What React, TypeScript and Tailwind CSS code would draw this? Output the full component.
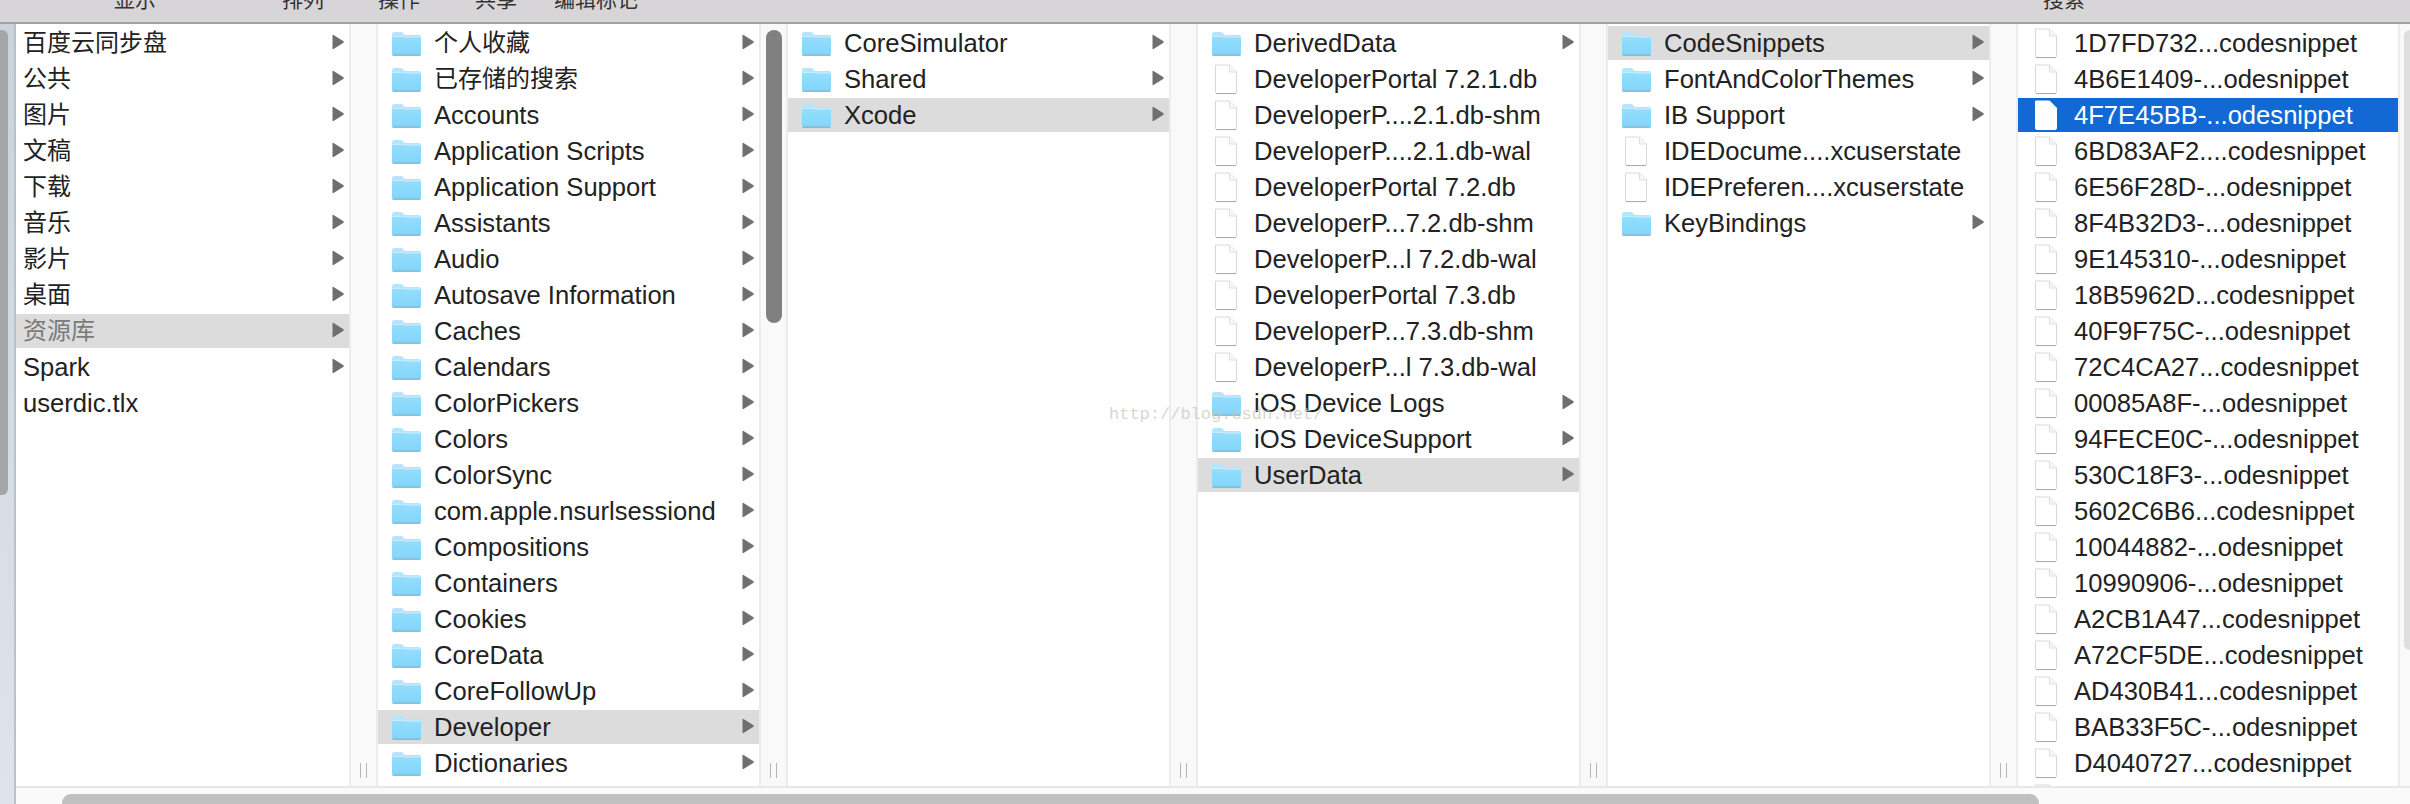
import React from "react";

type Item = { name: string; kind: "folder" | "file"; arrow?: boolean; state?: "open" | "active"; muted?: boolean };

const folder = (name: string, state?: "open" | "active", muted?: boolean): Item => ({ name, kind: "folder", arrow: true, state, muted });
const file = (name: string, state?: "open" | "active"): Item => ({ name, kind: "file", state });

const col0: Item[] = [
  folder("百度云同步盘"), folder("公共"), folder("图片"), folder("文稿"), folder("下载"), folder("音乐"),
  folder("影片"), folder("桌面"), folder("资源库", "open", true), folder("Spark"), file("userdic.tlx"),
];
const col1: Item[] = [
  folder("个人收藏"), folder("已存储的搜索"), folder("Accounts"), folder("Application Scripts"), folder("Application Support"),
  folder("Assistants"), folder("Audio"), folder("Autosave Information"), folder("Caches"), folder("Calendars"),
  folder("ColorPickers"), folder("Colors"), folder("ColorSync"), folder("com.apple.nsurlsessiond"), folder("Compositions"),
  folder("Containers"), folder("Cookies"), folder("CoreData"), folder("CoreFollowUp"), folder("Developer", "open"), folder("Dictionaries"),
];
const col2: Item[] = [folder("CoreSimulator"), folder("Shared"), folder("Xcode", "open")];
const col3: Item[] = [
  folder("DerivedData"), file("DeveloperPortal 7.2.1.db"), file("DeveloperP....2.1.db-shm"), file("DeveloperP....2.1.db-wal"),
  file("DeveloperPortal 7.2.db"), file("DeveloperP...7.2.db-shm"), file("DeveloperP...l 7.2.db-wal"), file("DeveloperPortal 7.3.db"),
  file("DeveloperP...7.3.db-shm"), file("DeveloperP...l 7.3.db-wal"), folder("iOS Device Logs"), folder("iOS DeviceSupport"), folder("UserData", "open"),
];
const col4: Item[] = [
  folder("CodeSnippets", "open"), folder("FontAndColorThemes"), folder("IB Support"), file("IDEDocume....xcuserstate"),
  file("IDEPreferen....xcuserstate"), folder("KeyBindings"),
];
const col5: Item[] = [
  file("1D7FD732...codesnippet"), file("4B6E1409-...odesnippet"), file("4F7E45BB-...odesnippet", "active"), file("6BD83AF2....codesnippet"),
  file("6E56F28D-...odesnippet"), file("8F4B32D3-...odesnippet"), file("9E145310-...odesnippet"), file("18B5962D...codesnippet"),
  file("40F9F75C-...odesnippet"), file("72C4CA27...codesnippet"), file("00085A8F-...odesnippet"), file("94FECE0C-...odesnippet"),
  file("530C18F3-...odesnippet"), file("5602C6B6...codesnippet"), file("10044882-...odesnippet"), file("10990906-...odesnippet"),
  file("A2CB1A47...codesnippet"), file("A72CF5DE...codesnippet"), file("AD430B41...codesnippet"), file("BAB33F5C-...odesnippet"),
  file("D4040727...codesnippet"), file(""),
];

function FolderIcon() {
  return (
    <svg width="31" height="25" viewBox="0 0 31 25" className="shrink-0">
      <defs>
        <linearGradient id="folderFront" x1="0" y1="0" x2="0" y2="1">
          <stop offset="0" stopColor="#93defd" />
          <stop offset="1" stopColor="#82d5fb" />
        </linearGradient>
      </defs>
      <path d="M1 3.5 Q1 1 3 1 H10 Q11.5 1 12.5 2.5 L13.5 4 H28 Q30 4 30 6 V10 H1 Z" fill="#b2e6fc" />
      <path d="M1 6 H30 V22.5 Q30 24 28.5 24 H2.5 Q1 24 1 22.5 Z" fill="url(#folderFront)" />
      <path d="M1 5.5 H13.5 L14 6 H30" fill="none" stroke="#c8eefd" strokeWidth="1" />
      <path d="M1.5 24.2 H29.5" stroke="#8aa9bc" strokeWidth="1.2" />
    </svg>
  );
}

function FileIcon({ active }: { active?: boolean }) {
  return (
    <svg width="24" height="31" viewBox="0 0 24 31" className="shrink-0">
      <path
        d="M1.5 1 H15.5 L22.5 8 V28 Q22.5 29.5 21 29.5 H3 Q1.5 29.5 1.5 28 Z"
        fill="#ffffff"
        stroke={active ? "#ffffff" : "#d8d8d8"}
        strokeWidth="1"
      />
      {!active && <path d="M15.5 1 V8 H22.5" fill="#f7f7f7" stroke="#dedede" strokeWidth="1" />}
      {!active && <path d="M2 29.6 H22" stroke="#a8a8a8" strokeWidth="1" />}
    </svg>
  );
}

function Row({ item, iconless }: { item: Item; iconless?: boolean }) {
  const active = item.state === "active";
  const open = item.state === "open";
  const cjk = /[\u4e00-\u9fff]/.test(item.name);
  return (
    <div
      className={`flex h-[34px] shrink-0 items-center pr-[5px] ${active ? "bg-[#1269d6] text-white" : open ? "bg-[#dcdcdc]" : ""} ${
        item.muted ? "text-[#7a7a7a]" : active ? "" : "text-[#222222]"
      } ${iconless ? "pl-[7px]" : ""}`}
    >
      {!iconless && (
        <div className="flex h-[32px] w-[56px] shrink-0 items-center justify-center">
          {item.kind === "folder" ? <FolderIcon /> : <FileIcon active={active} />}
        </div>
      )}
      <span className={`flex-1 whitespace-nowrap leading-[34px] ${cjk ? "text-[24px]" : "text-[25.6px]"}`}>{item.name}</span>
      {item.arrow && (
        <svg width="12" height="16" viewBox="0 0 12 16" className="mb-[2px] shrink-0">
          <path d="M0.5 1.5 Q0.5 0.5 1.5 1 L11.5 7.2 Q12 8 11.5 8.8 L1.5 15 Q0.5 15.5 0.5 14.5 Z" fill="#6f6f6f" />
        </svg>
      )}
    </div>
  );
}

function Column({ items, width, iconless }: { items: Item[]; width: string; iconless?: boolean }) {
  return (
    <div className={`flex h-full shrink-0 flex-col gap-[2px] overflow-hidden bg-white pt-[2px] ${width}`}>
      {items.map((item, i) => (
        <Row key={i} item={item} iconless={iconless} />
      ))}
    </div>
  );
}

function Gutter({ thumb }: { thumb?: boolean }) {
  return (
    <div className="flex h-full w-[29px] shrink-0 flex-col items-center border-x-2 border-[#ececec] bg-[#f9f9f9]">
      {thumb && <div className="mt-[6px] h-[293px] w-[16px] rounded-full bg-[#808080]" />}
      <div className="mt-auto mb-[8px] flex gap-[5px]">
        <div className="h-[15px] w-[1px] bg-[#b5b5b5]" />
        <div className="h-[15px] w-[1px] bg-[#b5b5b5]" />
      </div>
    </div>
  );
}

const labels: [string, string][] = [
  ["显示", "ml-[114px]"],
  ["排列", "ml-[126px]"],
  ["操作", "ml-[54px]"],
  ["共享", "ml-[55px]"],
  ["编辑标记", "ml-[37px]"],
  ["搜索", "ml-[1405px]"],
];

export default function App() {
  return (
    <div
      className="relative flex h-[804px] w-[2410px] flex-col overflow-hidden bg-white"
      style={{ fontFamily: '"Liberation Sans", "Noto Sans CJK SC", sans-serif' }}
    >
      <div className="flex h-[24px] shrink-0 overflow-hidden border-b-2 border-[#a3a3a3] bg-[#d7d5d7]">
        {labels.map(([text, margin]) => (
          <span key={text} className={`-mt-[12px] whitespace-nowrap text-[21px] leading-[24px] text-[#333333] ${margin}`}>
            {text}
          </span>
        ))}
      </div>

      <div className="flex min-h-0 flex-1">
        <div className="flex w-[16px] shrink-0 flex-col border-r-2 border-[#b9c1c9] bg-gradient-to-b from-[#ccd2dc] to-[#dde5ea] pt-[6px]">
          <div className="h-[465px] w-[8px] rounded-r-[6px] bg-[#a3a6a8]" />
        </div>

        <div className="flex min-w-0 flex-1 flex-col">
          <div className="flex h-[762px] shrink-0">
            <Column items={col0} width="w-[333px]" iconless />
            <Gutter />
            <Column items={col1} width="w-[381px]" />
            <Gutter thumb />
            <Column items={col2} width="w-[381px]" />
            <Gutter />
            <Column items={col3} width="w-[381px]" />
            <Gutter />
            <Column items={col4} width="w-[381px]" />
            <Gutter />
            <Column items={col5} width="w-[380px]" />
            <div className="flex h-full flex-1 justify-end border-l-2 border-[#ececec] bg-[#f9f9f9] pt-[6px]">
              <div className="h-[620px] w-[6px] rounded-l-[6px] bg-[#dedede]" />
            </div>
          </div>
          <div className="flex-1 border-t-2 border-[#e8e8e8] bg-[#fafafa] pt-[6px] pl-[46px]">
            <div className="h-[12px] w-[1977px] rounded-t-[9px] bg-[#c0c0c0]" />
          </div>
        </div>
      </div>

      <div
        className="pointer-events-none absolute top-[405px] left-[1109px] whitespace-nowrap text-[17px] leading-[20px] text-[#c8c8b8] opacity-70"
        style={{ fontFamily: '"Liberation Mono", monospace' }}
      >
        http://blog.csdn.net/
      </div>
    </div>
  );
}
